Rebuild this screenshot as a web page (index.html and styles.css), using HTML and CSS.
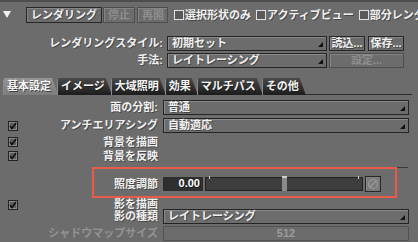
FILE: index.html
```html
<!DOCTYPE html>
<html lang="ja">
<head>
    <meta charset="UTF-8">
    <meta name="viewport" content="width=device-width, initial-scale=1.0">
    <title>レンダリング設定</title>
    <link rel="stylesheet" href="styles.css">
</head>
<body>
    <div class="top-strip"></div>

    <div class="toolbar">
        <svg class="collapse" width="8" height="8" viewBox="0 0 8 8"><polygon points="0,0 8,0 4,7" fill="#f2f2f2"/></svg>
        <button class="btn btn-render">レンダリング</button>
        <button class="btn btn-stop" disabled>停止</button>
        <button class="btn btn-resume" disabled>再開</button>
        <span class="opt"><span class="opt-box"></span>選択形状のみ</span>
        <span class="opt"><span class="opt-box"></span>アクティブビュー</span>
        <span class="opt"><span class="opt-box"></span>部分レンダ</span>
    </div>

    <section class="style-form">
        <div class="style-row">
            <span class="style-label">レンダリングスタイル:</span>
            <div class="select select-style"><span>初期セット</span><i class="select-arrow"></i></div>
            <button class="btn btn-file">読込...</button>
            <button class="btn btn-file">保存...</button>
        </div>
        <div class="style-row">
            <span class="style-label">手法:</span>
            <div class="select select-style"><span>レイトレーシング</span><i class="select-arrow"></i></div>
            <button class="btn btn-setup" disabled>設定...</button>
        </div>
    </section>

    <nav class="tabs">
        <span class="tab active">基本設定</span>
        <span class="tab">イメージ</span>
        <span class="tab">大域照明</span>
        <span class="tab">効果</span>
        <span class="tab">マルチパス</span>
        <span class="tab">その他</span>
        <span class="tabs-line"></span>
    </nav>

    <section class="panel">
        <div class="field-row row-select">
            <div class="field-head"><span class="field-label">面の分割:</span></div>
            <div class="select select-wide"><span>普通</span><i class="select-arrow"></i></div>
        </div>
        <div class="field-row row-select">
            <div class="field-head">
                <span class="check"><svg width="8" height="8" viewBox="0 0 8 8"><path d="M1 4 L3 6.5 L7 1" fill="none" stroke="#111" stroke-width="1.6"/></svg></span>
                <span class="field-label">アンチエリアシング</span>
            </div>
            <div class="select select-wide"><span>自動適応</span><i class="select-arrow"></i></div>
        </div>
        <div class="field-row row-check">
            <div class="field-head">
                <span class="check"><svg width="8" height="8" viewBox="0 0 8 8"><path d="M1 4 L3 6.5 L7 1" fill="none" stroke="#111" stroke-width="1.6"/></svg></span>
                <span class="field-label">背景を描画</span>
            </div>
        </div>
        <div class="field-row row-check">
            <div class="field-head">
                <span class="check"><svg width="8" height="8" viewBox="0 0 8 8"><path d="M1 4 L3 6.5 L7 1" fill="none" stroke="#111" stroke-width="1.6"/></svg></span>
                <span class="field-label">背景を反映</span>
            </div>
        </div>

        <div class="separator"></div>

        <div class="highlight">
            <div class="field-row row-slider">
                <div class="field-head"><span class="field-label">照度調節</span></div>
                <div class="slider-group">
                    <span class="num-field">0.00</span>
                    <div class="slider">
                        <i class="tick tick-start"></i>
                        <i class="tick tick-end"></i>
                        <i class="slider-thumb"></i>
                    </div>
                    <button class="btn btn-reset">
                        <svg width="12" height="12" viewBox="0 0 12 12"><circle cx="6" cy="6" r="4.5" fill="none" stroke="#9a9a9a" stroke-width="1.2"/><path d="M2.5 9.5 L9.5 2.5" stroke="#9a9a9a" stroke-width="1.2"/></svg>
                    </button>
                </div>
            </div>
        </div>

        <div class="field-row row-shadow">
            <div class="field-head">
                <span class="check"><svg width="8" height="8" viewBox="0 0 8 8"><path d="M1 4 L3 6.5 L7 1" fill="none" stroke="#111" stroke-width="1.6"/></svg></span>
                <span class="field-label">影を描画</span>
            </div>
        </div>
        <div class="field-row row-select">
            <div class="field-head"><span class="field-label">影の種類</span></div>
            <div class="select select-wide"><span>レイトレーシング</span><i class="select-arrow"></i></div>
        </div>
        <div class="field-row row-select">
            <div class="field-head"><span class="field-label disabled">シャドウマップサイズ</span></div>
            <div class="value-field disabled">512</div>
        </div>
    </section>
</body>
</html>
```

FILE: styles.css
```css
* {
    margin: 0;
    padding: 0;
    box-sizing: border-box;
}

body {
    font-family: 'Liberation Sans', 'Noto Sans CJK JP', sans-serif;
    font-size: 11px;
    font-weight: 700;
    line-height: 13px;
    background-color: #6c6c6c;
    color: #f0f0f0;
    width: 418px;
    height: 242px;
    overflow: hidden;
    white-space: nowrap;
    text-shadow: 1px 1px 0 rgba(0,0,0,0.35);
}

.top-strip {
    height: 2px;
    background-color: #4e4e4e;
}

/* ボタン共通 */
.btn {
    font: inherit;
    color: #f0f0f0;
    background-color: #6c6c6c;
    border: 1px solid #262626;
    box-shadow: inset 1px 1px 0 #858585;
    height: 16px;
    padding: 0 4px;
    text-shadow: inherit;
}

.btn:disabled {
    color: #8e8e8e;
    border-color: #4e4e4e;
    text-shadow: none;
}

/* ツールバー */
.toolbar {
    display: flex;
    align-items: center;
    height: 16px;
    margin-top: 5px;
    padding-left: 3px;
}

.toolbar > * {
    flex-shrink: 0;
}

.collapse {
    margin-right: 15px;
}

.btn-render {
    width: 76px;
}

.btn-stop {
    width: 32px;
    margin-left: 1px;
}

.btn-resume {
    width: 31px;
    margin-left: 2px;
}

.opt {
    display: flex;
    align-items: center;
    margin-left: 6px;
}

.opt + .opt {
    margin-left: 5px;
}

.opt-box {
    width: 10px;
    height: 10px;
    border: 1px solid #e2e2e2;
    background-color: #5a5a5a;
    margin-right: 1px;
}

/* レンダリングスタイル */
.style-form {
    margin-top: 13px;
}

.style-row {
    display: flex;
    align-items: center;
    height: 15px;
    margin-bottom: 2px;
}

.style-label {
    width: 167px;
    padding-right: 4px;
    text-align: right;
}

.select {
    display: flex;
    align-items: center;
    height: 15px;
    padding-left: 4px;
    border: 1px solid #242424;
    box-shadow: inset 1px 1px 0 #8a8a8a;
}

.select span {
    flex: 1;
}

.select-arrow {
    align-self: flex-end;
    width: 0;
    height: 0;
    border-left: 5px solid transparent;
    border-bottom: 5px solid #111;
    margin: 0 3px 3px 0;
}

.select-style {
    width: 160px;
}

.btn-file {
    width: 36px;
    height: 15px;
    margin-left: 2px;
    padding: 0;
}

.btn-file + .btn-file {
    margin-left: 3px;
}

.btn-setup {
    width: 75px;
    height: 15px;
    margin-left: 2px;
}

/* タブ */
.tabs {
    display: flex;
    align-items: flex-end;
    margin-top: 9px;
    padding-left: 3px;
    height: 18px;
}

.tab {
    height: 17px;
    line-height: 17px;
    padding: 0 7px 0 3px;
    margin-right: -1px;
    color: #f4f4f4;
    background: linear-gradient(#4a4a4a, #1c1c1c);
    clip-path: polygon(0 2px, 2px 0, calc(100% - 6px) 0, 100% 100%, 0 100%);
    border-left: 1px solid #8a8a8a;
}

.tab.active {
    background: linear-gradient(#959595, #7c7c7c);
    text-shadow: 1px 1px 0 rgba(0,0,0,0.5);
}

.tabs-line {
    flex: 1;
    height: 1px;
    background-color: #2e2e2e;
    margin-right: 6px;
}

/* 設定パネル */
.panel {
    padding-top: 5px;
}

.field-row {
    display: grid;
    grid-template-columns: 163px 1fr;
    align-items: center;
}

.row-select {
    height: 15px;
    margin-bottom: 2px;
}

.row-select:first-child {
    margin-bottom: 3px;
}

.row-check {
    height: 14px;
}

.row-shadow {
    height: 11px;
}

.field-head {
    display: flex;
    align-items: center;
}

.field-label {
    margin-left: auto;
    padding-right: 5px;
}

.field-label.disabled {
    color: #939393;
    text-shadow: none;
}

.check {
    display: flex;
    align-items: center;
    justify-content: center;
    width: 10px;
    height: 10px;
    margin-left: 8px;
    border: 1px solid #232323;
    background-color: #5c5c5c;
    box-shadow: inset 0 0 0 1px #8a8a8a;
}

.select-wide {
    width: 246px;
}

.value-field {
    width: 246px;
    height: 15px;
    border: 1px solid #525252;
    text-align: center;
    line-height: 13px;
}

.value-field.disabled {
    color: #9c9c9c;
    text-shadow: none;
}

.separator {
    height: 1px;
    margin: 4px 10px 0 165px;
    background-color: #3a3a3a;
}

/* 照度調節 */
.highlight {
    width: 305px;
    height: 31px;
    margin: -1px 0 0 92px;
    padding-top: 7px;
    border: 2px solid #ea5a48;
}

.highlight .field-row {
    grid-template-columns: 69px 1fr;
}

.slider-group {
    display: flex;
    align-items: center;
}

.num-field {
    width: 40px;
    height: 14px;
    background-color: #2e2e2e;
    text-align: right;
    padding-right: 3px;
    color: #ffffff;
}

.slider {
    position: relative;
    width: 158px;
    height: 14px;
    margin-left: 2px;
    background-color: #3e3e3e;
    border: 1px solid #222;
}

.tick {
    position: absolute;
    top: -2px;
    width: 1px;
    height: 3px;
    background-color: #cfcfcf;
}

.tick-start {
    left: 3px;
}

.tick-end {
    right: 3px;
}

.slider-thumb {
    position: absolute;
    top: -2px;
    left: 76px;
    width: 5px;
    height: 15px;
    background-color: #8a8a8a;
    border-top: 2px solid #cfcfcf;
}

.btn-reset {
    display: flex;
    align-items: center;
    justify-content: center;
    width: 16px;
    height: 16px;
    margin-left: 2px;
    padding: 0;
    background-color: #7a7a7a;
}
```
